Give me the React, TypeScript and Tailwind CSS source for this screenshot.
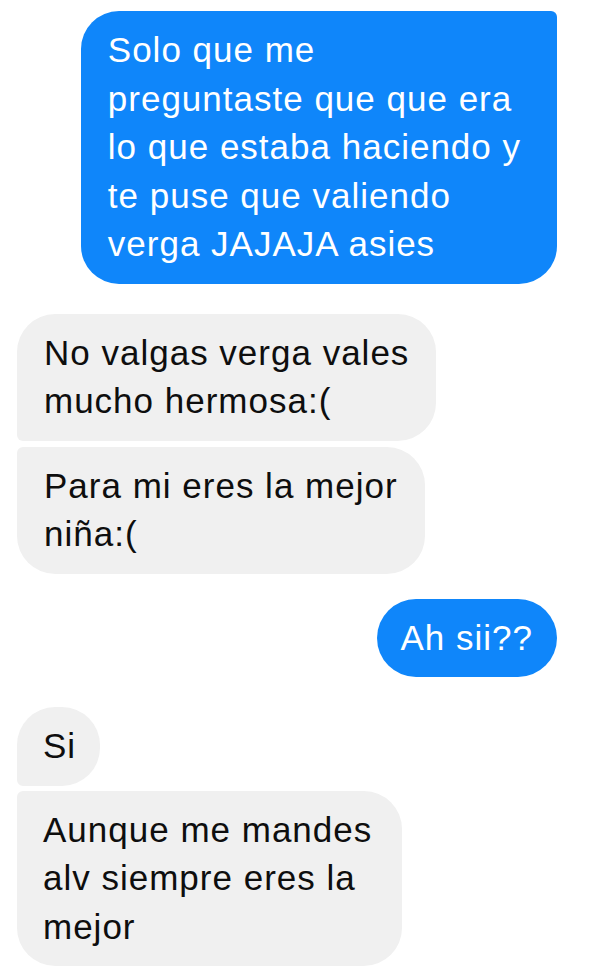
// @ts-nocheck
const messages = [
  {
    from: "me",
    lines: ["Solo que me", "preguntaste que que era", "lo que estaba haciendo y", "te puse que valiendo", "verga JAJAJA asies"],
    shape: "rounded-[38px] rounded-tr-[6px] pl-[27px] pr-[36px]",
    gap: "mt-[11px]",
  },
  {
    from: "them",
    lines: ["No valgas verga vales", "mucho hermosa:("],
    shape: "rounded-[38px] rounded-bl-[6px] px-[27px]",
    gap: "mt-[30px]",
  },
  {
    from: "them",
    lines: ["Para mi eres la mejor", "niña:("],
    shape: "rounded-[38px] rounded-tl-[6px] px-[27px]",
    gap: "mt-[6px]",
  },
  {
    from: "me",
    lines: ["Ah sii??"],
    shape: "rounded-full pl-[23px] pr-[24px]",
    gap: "mt-[25px]",
  },
  {
    from: "them",
    lines: ["Si"],
    shape: "rounded-[38px] rounded-bl-[6px] pl-[26px] pr-[24px]",
    gap: "mt-[30px]",
  },
  {
    from: "them",
    lines: ["Aunque me mandes", "alv siempre eres la", "mejor"],
    shape: "rounded-[38px] rounded-tl-[6px] pl-[26px] pr-[30px]",
    gap: "mt-[5px]",
  },
];

function Bubble({ from, lines, shape, gap }) {
  const mine = from === "me";
  return (
    <div className={`flex ${gap} ${mine ? "justify-end" : "justify-start"}`}>
      <div
        className={`w-fit py-[15px] whitespace-nowrap ${shape} ${
          mine ? "bg-[#0f86fa] text-white" : "bg-[#f0f0f0] text-[#0e0e0e]"
        }`}
      >
        {lines.map((line, i) => (
          <div key={i} className="leading-[48.5px]">
            {line}
          </div>
        ))}
      </div>
    </div>
  );
}

export default function App() {
  return (
    <main
      className="min-h-[980px] w-[596px] bg-white pl-[17px] pr-[39px] text-[35px] tracking-[1px]"
      style={{ fontFamily: '"Liberation Sans", Arial, sans-serif' }}
    >
      {messages.map((m, i) => (
        <Bubble key={i} {...m} />
      ))}
    </main>
  );
}
